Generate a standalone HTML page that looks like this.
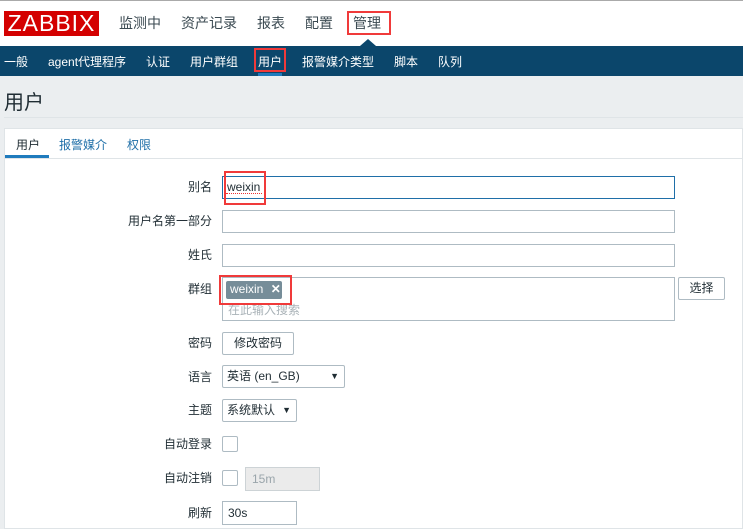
<!DOCTYPE html>
<html><head><meta charset="utf-8"><style>
*{margin:0;padding:0;box-sizing:border-box}
body{width:743px;height:529px;overflow:hidden;position:relative;background:#ebeef0;font-family:"Liberation Sans","Noto Sans CJK SC",sans-serif;font-size:12px;color:#1f2c33}
.a{position:absolute;white-space:nowrap}
.top{left:0;top:0;width:743px;height:46px;background:#fff;border-top:1px solid #aaa}
.nav{font-size:14px;color:#3b4a52;top:13px}
.bar{left:0;top:46px;width:743px;height:30px;background:#0b466b}
.sub{color:#fff;font-size:12px;top:53px}
.red{border:2px solid #f03a3a}
.lbl{right:531px;text-align:right;color:#1f2c33;margin-top:-2px}
.in{background:#fff;border:1px solid #aebbc3;left:222px;width:453px;height:23px}
.btn{background:#fff;border:1px solid #aebbc3;border-radius:2px;text-align:center;line-height:21px;height:23px}
</style></head><body>
<div class="a top"></div>
<div class="a" style="left:4px;top:11px;width:95px;height:25px;background:#d40000;color:#fff;font-size:23px;line-height:25px;text-align:center;letter-spacing:1px">ZABBIX</div>
<div class="a nav" style="left:119px">监测中</div>
<div class="a nav" style="left:181px">资产记录</div>
<div class="a nav" style="left:257px">报表</div>
<div class="a nav" style="left:305px">配置</div>
<div class="a nav" style="left:353px">管理</div>
<div class="a red" style="left:347px;top:11px;width:44px;height:24px"></div>
<div class="a bar"></div>
<div class="a" style="left:360px;top:39px;width:0;height:0;border-left:8px solid transparent;border-right:8px solid transparent;border-bottom:7px solid #0b466b"></div>
<div class="a sub" style="left:4px">一般</div>
<div class="a sub" style="left:48px">agent代理程序</div>
<div class="a sub" style="left:146px">认证</div>
<div class="a sub" style="left:190px">用户群组</div>
<div class="a sub" style="left:258px">用户</div>
<div class="a sub" style="left:302px">报警媒介类型</div>
<div class="a sub" style="left:394px">脚本</div>
<div class="a sub" style="left:438px">队列</div>
<div class="a" style="left:258px;top:73px;width:24px;height:3px;background:#1f7bbd"></div>
<div class="a red" style="left:254px;top:48px;width:32px;height:24px"></div>
<div class="a" style="left:4px;top:86px;font-size:20px;color:#1f2c33">用户</div>
<div class="a" style="left:4px;top:117px;width:739px;height:1px;background:#dfe4e7"></div>
<div class="a" style="left:4px;top:128px;width:739px;height:401px;background:#fff;border:1px solid #dfe4e7"></div>
<div class="a" style="left:16px;top:136px;color:#1f2c33">用户</div>
<div class="a" style="left:59px;top:136px;color:#1f6fa8">报警媒介</div>
<div class="a" style="left:127px;top:136px;color:#1f6fa8">权限</div>
<div class="a" style="left:4px;top:158px;width:739px;height:1px;background:#dfe4e7"></div>
<div class="a" style="left:5px;top:155px;width:44px;height:3px;background:#1f7bbd"></div>

<div class="a lbl" style="top:180px">别名</div>
<div class="a in" style="top:176px;border-color:#1f6fa8;padding:3px 4px">weixin</div>
<div class="a" style="left:226px;top:193px;width:36px;border-bottom:1px dotted #e33"></div>
<div class="a red" style="left:224px;top:171px;width:42px;height:34px"></div>
<div class="a lbl" style="top:214px">用户名第一部分</div>
<div class="a in" style="top:210px"></div>
<div class="a lbl" style="top:248px">姓氏</div>
<div class="a in" style="top:244px"></div>
<div class="a lbl" style="top:282px">群组</div>
<div class="a in" style="top:277px;height:44px"></div>
<div class="a" style="left:226px;top:281px;width:56px;height:18px;background:#768d99;color:#fff;border-radius:2px;padding:1px 4px;font-size:12px">weixin <span style="margin-left:4px;font-weight:bold">✕</span></div>
<div class="a" style="left:228px;top:301px;color:#aab3b8">在此输入搜索</div>
<div class="a red" style="left:219px;top:275px;width:73px;height:30px"></div>
<div class="a btn" style="left:678px;top:277px;width:47px">选择</div>
<div class="a lbl" style="top:336px">密码</div>
<div class="a btn" style="left:222px;top:332px;width:72px">修改密码</div>
<div class="a lbl" style="top:370px">语言</div>
<div class="a btn" style="left:222px;top:365px;width:123px;text-align:left;padding-left:4px">英语 (en_GB)<span style="position:absolute;right:5px;font-size:9px">▼</span></div>
<div class="a lbl" style="top:403px">主题</div>
<div class="a btn" style="left:222px;top:399px;width:75px;text-align:left;padding-left:4px">系统默认<span style="position:absolute;right:5px;font-size:9px">▼</span></div>
<div class="a lbl" style="top:437px">自动登录</div>
<div class="a" style="left:222px;top:436px;width:16px;height:16px;border:1px solid #aebbc3;border-radius:2px"></div>
<div class="a lbl" style="top:471px">自动注销</div>
<div class="a" style="left:222px;top:470px;width:16px;height:16px;border:1px solid #aebbc3;border-radius:2px"></div>
<div class="a" style="left:245px;top:467px;width:75px;height:24px;background:#ebebeb;border:1px solid #cdd3d6;color:#9aa5ab;padding:4px 6px">15m</div>
<div class="a lbl" style="top:506px">刷新</div>
<div class="a" style="left:222px;top:501px;width:75px;height:24px;border:1px solid #aebbc3;padding:4px 5px">30s</div>
</body></html>
